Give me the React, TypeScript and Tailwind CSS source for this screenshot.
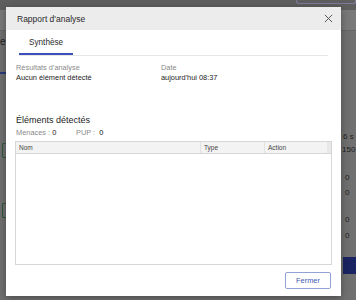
import React from "react";

const font = { fontFamily: '"Liberation Sans", Arial, sans-serif' };

function Background() {
  return (
    <div className="flex h-[300px] w-[356px] flex-col bg-[#707070]">
      <div className="flex h-[10px] justify-end bg-[#5f5f5f]">
        <div className="mr-0 h-[4px] w-[60px] rounded-b-[3px] border-x border-b border-[#7d7a9a]" />
      </div>
      <div className="h-[20px] bg-[#797979]" />
      <div className="h-px bg-[#666]" />
      <div className="flex flex-1">
        <div className="flex w-[6px] flex-col">
          <div className="mt-[6px] text-[10px] leading-[10px] text-[#222]">e</div>
          <div className="mt-[25px] h-[2px] w-[6px] bg-[#2a3a7a]" />
          <div className="mt-[69px] ml-[2px] h-[15px] w-[4px] rounded-l-[2px] border-y border-l border-[#2f5a3c]" />
          <div className="mt-[45px] ml-[2px] h-[15px] w-[4px] rounded-l-[2px] border-y border-l border-[#2f5a3c]" />
        </div>
        <div className="flex-1" />
        <div className="flex w-[15px] flex-col pl-[2px] text-[8px] leading-[10px] text-[#1e1e1e]">
          <div className="mt-[101px]">6 s</div>
          <div className="mt-[3px] -ml-[1px]">150</div>
          <div className="mt-[18px] ml-[2px]">0</div>
          <div className="mt-[5px] ml-[2px]">0</div>
          <div className="mt-[17px] ml-[2px]">0</div>
          <div className="mt-[6px] ml-[2px]">0</div>
          <div className="mt-[16px] h-[17px] w-[13px] bg-[#1b2462]" />
        </div>
      </div>
    </div>
  );
}

function Modal() {
  return (
    <div
      className="absolute left-[6px] top-[7px] flex h-[289px] w-[335px] flex-col bg-white shadow-[0_2px_8px_rgba(0,0,0,0.35)]"
      style={font}
    >
      <div className="flex h-[23px] items-center justify-between bg-[#ececed] pl-[11px] pr-[8px]">
        <span className="text-[8.5px] leading-[10px] text-[#2a2a2a]">Rapport d'analyse</span>
        <svg width="9" height="9" viewBox="0 0 10 10" className="text-[#555]">
          <path d="M1 1 L9 9 M9 1 L1 9" stroke="currentColor" strokeWidth="1.1" fill="none" />
        </svg>
      </div>
      <div className="mx-[13px] mt-[2px] flex w-[309px] border-b border-[#e6e6e6]">
        <div className="flex h-[23px] w-[54px] items-center border-b-2 border-[#3d4fb8] pl-[10px] pt-[1px] text-[8.2px] leading-[10px] text-[#2a2a2a]">
          Synthèse
        </div>
      </div>
      <div className="mt-[7px] flex px-[10px] text-[7.4px] leading-[10px]">
        <div className="flex w-[145px] flex-col">
          <span className="text-[#8a8a8a]">Résultats d'analyse</span>
          <span className="text-[#222]">Aucun élément détecté</span>
        </div>
        <div className="flex flex-col">
          <span className="text-[#8a8a8a]">Date</span>
          <span className="text-[#222]">aujourd'hui 08:37</span>
        </div>
      </div>
      <div className="mt-[31px] px-[10px] text-[9px] font-medium leading-[12px] text-[#1e1e1e]">
        Éléments détectés
      </div>
      <div className="mt-[2px] flex px-[10px] text-[7.4px] leading-[10px]">
        <span className="w-[60px] text-[#8a8a8a]">
          Menaces : <span className="text-[#222]">0</span>
        </span>
        <span className="text-[#8a8a8a]">
          PUP : <span className="ml-[2px] text-[#222]">0</span>
        </span>
      </div>
      <div className="mx-[9px] mt-[3px] flex h-[124px] w-[317px] flex-col border border-[#d6d6d6]">
        <div className="flex h-[12px] border-b border-[#d6d6d6] bg-[#f3f3f3] text-[6.5px] leading-[11px] text-[#444]">
          <div className="w-[185px] border-r border-[#e2e2e2] pl-[3px]">Nom</div>
          <div className="w-[64px] border-r border-[#e2e2e2] pl-[3px]">Type</div>
          <div className="flex-1 pl-[3px]">Action</div>
          <div className="w-[4px] bg-[#e8e8e8]" />
        </div>
        <div className="flex-1" />
      </div>
      <div className="mt-[7px] flex justify-end pr-[10px]">
        <button className="flex h-[17px] w-[46px] items-center justify-center rounded-[2px] border border-[#93a2d4] bg-white text-[7.4px] leading-[10px] text-[#3d58b0]">
          Fermer
        </button>
      </div>
    </div>
  );
}

export default function App() {
  return (
    <div className="relative h-[300px] w-[356px] overflow-hidden" style={font}>
      <Background />
      <Modal />
    </div>
  );
}
